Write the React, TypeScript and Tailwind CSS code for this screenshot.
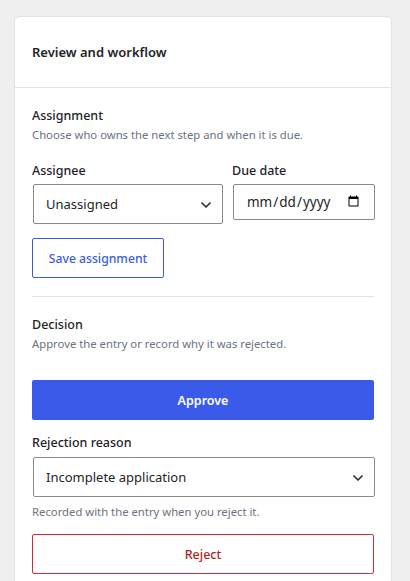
import { ChevronDown } from "lucide-react";

function SectionHead({ title, text }: { title: string; text: string }) {
  return (
    <div>
      <h3 className="pt-px text-[12.5px] leading-[18px] mb-px font-medium text-[#1f2328]">{title}</h3>
      <p className="text-[11.3px] leading-[18px] text-[#6b7280]">{text}</p>
    </div>
  );
}

function Field({ label, children }: { label: string; children: React.ReactNode }) {
  return (
    <label className="flex flex-col min-w-0">
      <span className="pt-px text-[12.5px] leading-[20px] font-medium text-[#1f2328] mb-[3px]">{label}</span>
      {children}
    </label>
  );
}

function Select({ value }: { value: string }) {
  return (
    <div className="relative ml-px -mr-px">
      <select className="appearance-none w-full h-[40px] pl-[12px] pt-[2px] bg-white border border-[#8a8a8a] rounded-[2px] text-[13px] text-[#1f2328]">
        <option>{value}</option>
      </select>
      <ChevronDown className="absolute right-[9px] top-[13px] size-4 text-[#2b2b2b] pointer-events-none" strokeWidth={2.5} />
    </div>
  );
}

export default function App() {
  return (
    <div className="h-[581px] overflow-hidden bg-[#efefef] pt-4 pl-[14px] pr-[18px] font-['Noto_Sans',sans-serif]">
      <div className="bg-white border border-[#e2e2e2] rounded-[6px] h-[640px]">
        <div className="h-[71px] flex items-center px-[17px] pt-px border-b border-[#e2e2e2]">
          <h2 className="text-[13px] font-semibold text-[#1f2328]">Review and workflow</h2>
        </div>
        <div className="px-[17px] pt-[18px]">
          <SectionHead title="Assignment" text="Choose who owns the next step and when it is due." />
          <div className="grid grid-cols-[190px_142px] gap-x-[10px] mt-[16px] items-start">
            <Field label="Assignee">
              <Select value="Unassigned" />
            </Field>
            <Field label="Due date">
              <input
                type="date"
                className="ml-px w-full h-[36px] px-[12px] bg-white border border-[#8a8a8a] rounded-[2px] text-[13.5px] text-[#1f2328]"
              />
            </Field>
          </div>
          <button className="mt-[14px] h-[40px] w-[132px] pt-[2px] border border-[#3a5bea] rounded-[2px] text-[12.2px] font-medium text-[#3a5bea]">
            Save assignment
          </button>
          <div className="border-t border-[#e2e2e2] mt-[18px] mb-[18px]" />
          <SectionHead title="Decision" text="Approve the entry or record why it was rejected." />
          <button className="mt-[27px] h-[40px] w-full pt-[2px] bg-[#3a5bea] rounded-[2px] text-[12.5px] font-semibold text-white">
            Approve
          </button>
          <div className="mt-[12px]">
            <Field label="Rejection reason">
              <div className="pt-px">
                <Select value="Incomplete application" />
              </div>
            </Field>
          </div>
          <p className="mt-[6px] text-[11.3px] leading-[18px] text-[#6b7280]">Recorded with the entry when you reject it.</p>
          <button className="mt-[13px] h-[40px] w-full pt-[2px] border border-[#d32f2f] rounded-[2px] text-[12.5px] font-medium text-[#b71c1c]">
            Reject
          </button>
        </div>
      </div>
    </div>
  );
}
